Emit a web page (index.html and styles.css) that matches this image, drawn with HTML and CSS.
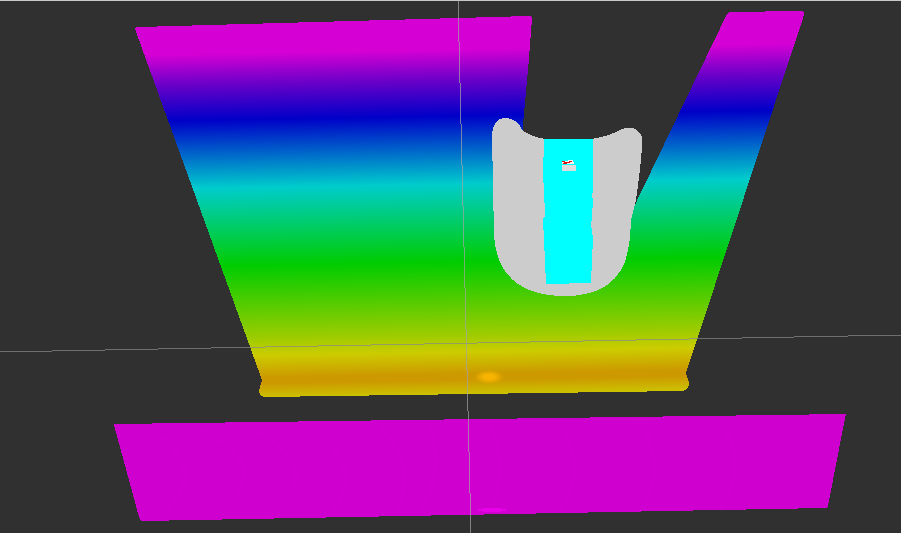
FILE: index.html
```html
<!DOCTYPE html>
<html lang="en">
<head>
<meta charset="utf-8">
<title>Point cloud view</title>
<link rel="stylesheet" href="styles.css">
</head>
<body>
<svg class="scene" width="901" height="533" viewBox="0 0 901 533" shape-rendering="crispEdges">
  <defs>
    <linearGradient id="height" gradientUnits="userSpaceOnUse" x1="450" y1="0" x2="457" y2="400">
      <stop class="s0" offset="0"/>
      <stop class="s0" offset="0.125"/>
      <stop class="s1" offset="0.2"/>
      <stop class="s2" offset="0.29"/>
      <stop class="s3" offset="0.46"/>
      <stop class="s4" offset="0.655"/>
      <stop class="s5" offset="0.84"/>
      <stop class="s6" offset="0.88"/>
      <stop class="s7" offset="0.935"/>
      <stop class="s7" offset="0.95"/>
      <stop class="s6" offset="0.995"/>
    </linearGradient>
    <radialGradient id="spot">
      <stop class="spot-a" offset="0.35"/>
      <stop class="spot-b" offset="1"/>
    </radialGradient>
  </defs>

  <path class="floor" d="M114,425 Q114,424 116,424 L846,414 L845,418 L828,506 Q827,508 825,508 L143,521 Q140,521 139,517 Z"/>
  <g class="rings">
    <path d="M150,430 Q215,470 160,515"/>
    <path d="M200,428 Q280,470 215,514"/>
    <path d="M250,427 Q330,470 270,514"/>
    <path d="M310,426 Q370,470 330,513"/>
    <path d="M380,425 Q420,470 395,512"/>
    <path d="M430,425 Q445,470 420,512"/>
    <path d="M490,424 Q510,470 490,511"/>
    <path d="M560,423 Q590,470 560,510"/>
    <path d="M640,422 Q670,470 640,510"/>
    <path d="M720,420 Q750,465 720,509"/>
  </g>
  <ellipse class="floor-glow" cx="492" cy="510" rx="14" ry="2"/>

  <path class="wall" d="M135,29 Q135,27 139,27 L529,16 Q532,16 532,19 L528,70 L522,135 L630,215 L727,14 Q728,12 731,12 L801,11 Q805,11 804,15 L686,373 L689,383 Q689,390 682,391 L265,397 Q259,396 259,391 L262,380 Z"/>
  <ellipse class="spot" cx="489" cy="377" rx="15" ry="7"/>

  <line class="axis-h" x1="0" y1="352" x2="901" y2="335"/>
  <line class="axis-v" x1="458" y1="0" x2="471" y2="533"/>
  <rect class="top-edge" x="0" y="0" width="901" height="1"/>

  <path class="shell" d="M492,135 Q493,118 506,118 Q518,119 522,130 Q532,137 545,139 L592,139 Q610,136 622,129 Q636,124 642,137 Q643,150 636,200 L631,220 Q630,250 624,264 Q610,296 565,296 Q520,296 503,268 Q495,254 494,235 Z"/>
  <polygon class="core" points="544,139 593,139 593,190 592,196 593,199 592,218 591,225 593,238 591,283 546,284 545,262 544,240 543,219 545,216 544,190 543,176"/>
  <polygon class="tag-top" points="562,161 573,160 574,164 562,164"/>
  <g class="tag-mark">
    <rect x="562" y="161" width="3" height="1"/>
    <rect x="564" y="162" width="3" height="1"/>
    <rect x="563" y="163" width="4" height="1"/>
    <rect x="567" y="162" width="3" height="1"/>
    <rect x="569" y="161" width="3" height="1"/>
  </g>
  <rect class="tag-box" x="562" y="165" width="14" height="6"/>
</svg>
</body>
</html>
```

FILE: styles.css
```css
html, body {
  margin: 0;
  padding: 0;
  background: #303030;
}

.scene {
  display: block;
  width: 901px;
  height: 533px;
}

.s0 { stop-color: #d400d4; }
.s1 { stop-color: #6a00c8; }
.s2 { stop-color: #0000c8; }
.s3 { stop-color: #00cccc; }
.s4 { stop-color: #00cc00; }
.s5 { stop-color: #a0cc00; }
.s6 { stop-color: #cccc00; }
.s7 { stop-color: #cc9900; }

.spot-a { stop-color: #f8b400; stop-opacity: 1; }
.spot-b { stop-color: #f8b400; stop-opacity: 0; }

.floor { fill: #cf00cf; }
.floor-glow { fill: #e800e8; }
.rings path { fill: none; stroke: #d900d9; stroke-width: 4; opacity: 0.2; }
.wall { fill: url(#height); }
.spot { fill: url(#spot); }
.axis-h { stroke: #8a8a8a; stroke-width: 1; opacity: 0.7; }
.axis-v { stroke: #a4a4a4; stroke-width: 1; opacity: 0.7; }
.top-edge { fill: #c8c8c8; }
.shell { fill: #cccccc; }
.core { fill: #00ffff; }
.tag-top { fill: #f4f4f4; }
.tag-mark rect { fill: #dd1111; }
.tag-box { fill: #dddddd; }
```
